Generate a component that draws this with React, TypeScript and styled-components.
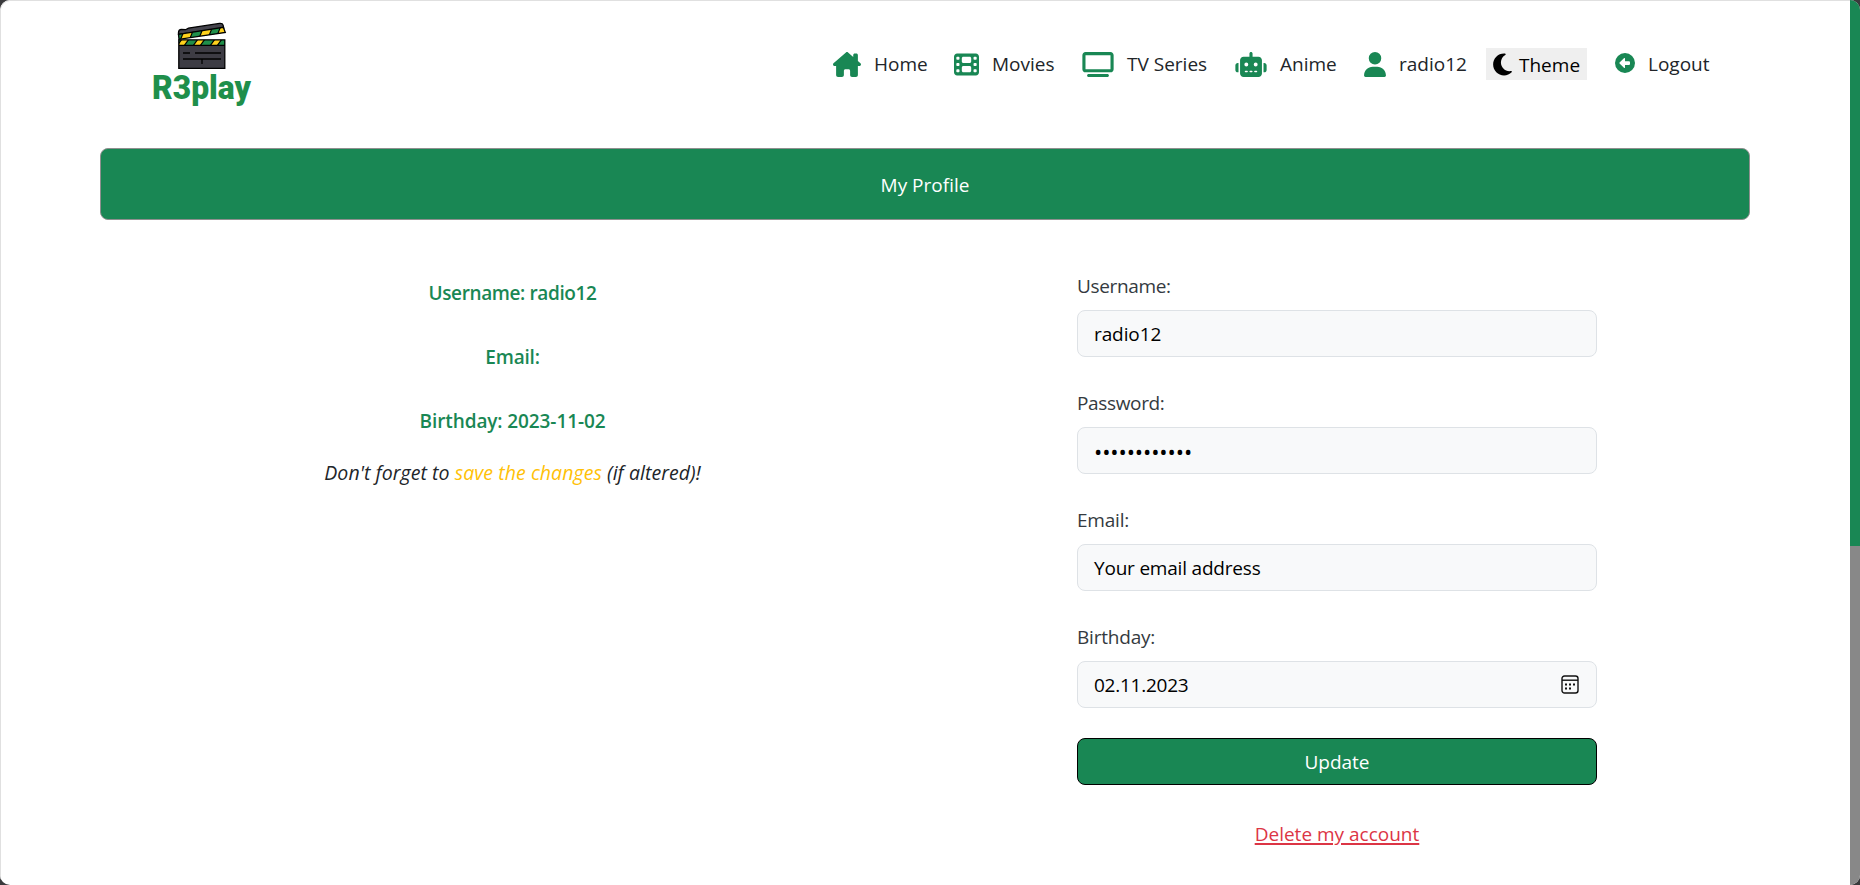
import React from "react";
import styled, { createGlobalStyle } from "styled-components";
import {
  FaHouseChimney,
  FaFilm,
  FaTv,
  FaRobot,
  FaUser,
  FaMoon,
  FaCircleLeft,
} from "react-icons/fa6";

const green = "#198754";

const GlobalStyle = createGlobalStyle`
  * { box-sizing: border-box; }
  body {
    margin: 0;
    background: #3a3a3c;
    font-family: "Open Sans", "Noto Sans", sans-serif;
    font-size: 19px;
    line-height: 30px;
    color: #212529;
  }
`;

const Window = styled.div`
  display: flex;
  width: 1860px;
  height: 885px;
  overflow: hidden;
  border-radius: 10px;
  background: #fff;
`;

const Page = styled.div`
  flex: 1;
  border: solid #e0e0e0;
  border-width: 1px 0 0 1px;
  border-top-left-radius: 10px;
  padding: 0 100px 0 99px;
`;

const ScrollTrack = styled.div`
  width: 10px;
  background: #888;
`;

const ScrollThumb = styled.div`
  height: 546px;
  background: ${green};
`;

const Header = styled.header`
  display: flex;
  align-items: center;
  height: 126px;
  padding-left: 46px;
`;

const Nav = styled.nav`
  display: flex;
  align-items: center;
  margin-left: auto;
  padding-right: 39px;
  gap: 27px;
`;

const NavLink = styled.a<{ $icon: number }>`
  display: flex;
  align-items: center;
  gap: 13px;
  color: #212529;
  svg {
    display: block;
    width: ${(p) => p.$icon}px;
    height: 25px;
    color: ${green};
  }
`;

const Label = styled.span<{ $w: number }>`
  width: ${(p) => p.$w}px;
  white-space: nowrap;
`;

const LogoutIcon = styled.span`
  display: flex;
  margin-top: -2px;
  && svg {
    height: 20px;
  }
`;

const ThemeButton = styled.button`
  display: flex;
  align-items: center;
  gap: 7px;
  width: 101px;
  height: 32px;
  margin: 0 1px 0 -7px;
  padding: 2px 7px 0;
  border: 0;
  background: #efefef;
  color: #000;
  font: inherit;
  line-height: 30px;
  text-align: left;
  svg {
    width: 19px;
    height: 25px;
    margin-top: -2px;
    flex: none;
  }
`;

const Banner = styled.h1`
  margin: 21px 0 0;
  height: 72px;
  border: 1px solid #8f8f8f;
  border-radius: 8px;
  background: ${green};
  color: #fff;
  font-size: 19px;
  font-weight: 400;
  line-height: 72px;
  text-align: center;
`;

const Columns = styled.main`
  display: grid;
  grid-template-columns: 1fr 1fr;
`;

const Summary = styled.section`
  padding-top: 58px;
  text-align: center;
`;

const Fact = styled.p<{ $track: number }>`
  margin: 0 0 34px;
  color: ${green};
  font-weight: 600;
  letter-spacing: ${(p) => p.$track}px;
`;

const Reminder = styled.p`
  margin: -12px 0 0;
  font-size: 19.5px;
  font-style: italic;
  letter-spacing: 0.06px;
`;

const Highlight = styled.span`
  color: #ffc107;
`;

const Form = styled.form`
  width: 520px;
  margin-left: 152px;
  padding-top: 51px;
`;

const Field = styled.div`
  margin-bottom: 31px;
`;

const FieldLabel = styled.label<{ $track: number }>`
  display: block;
  height: 30px;
  margin-bottom: 9px;
  color: #343a40;
  letter-spacing: ${(p) => p.$track}px;
`;

const Control = styled.div<{ $track: number; $size?: number }>`
  display: flex;
  align-items: center;
  justify-content: space-between;
  height: 47px;
  padding: 0 17px 0 16px;
  border: 1px solid #dee2e6;
  border-radius: 8px;
  background: #f8f9fa;
  color: #000;
  font-size: ${(p) => p.$size ?? 19}px;
  letter-spacing: ${(p) => p.$track}px;
`;

const UpdateButton = styled.button`
  display: block;
  width: 100%;
  height: 47px;
  margin: -1px 0 0;
  padding: 0;
  border: 1px solid #000;
  border-radius: 8px;
  background: ${green};
  color: #fff;
  font: inherit;
`;

const DeleteLink = styled.a`
  display: block;
  margin-top: 34px;
  color: #dc3545;
  text-align: center;
  text-decoration: underline;
  text-decoration-thickness: 2px;
  text-underline-offset: 2px;
`;

const LogoArt = styled.svg`
  display: block;
  overflow: visible;
`;

const Logo = () => (
  <LogoArt width="116" height="100" viewBox="0 -4 116 100">
    <defs>
      <clipPath id="arm">
        <path d="M32.5 16.3 77.3 9.3 79.3 14.5 33 21.3z" />
      </clipPath>
      <clipPath id="bar">
        <path d="M33 22h46v5H33z" />
      </clipPath>
    </defs>
    <path
      d="M32.5 16.5v-2q0-3 3-3.2l4 .4 3-1.6 31-4.7q3-.4 3.6 1.800l.7 3z"
      fill="#45444d"
      stroke="#000"
      strokeWidth="1.3"
    />
    <path d="M32.500 16.300 77.300 9.300 79.300 14.500 33 21.300z" fill="#1f8f4b" />
    <g clipPath="url(#arm)">
      {[36, 54, 71].map((x) => (
        <path key={x} d={`M${x + 5} 5h9l-7 18h-9z`} fill="#ffd21c" stroke="#000" strokeWidth="1.2" />
      ))}
    </g>
    <path d="M32.500 16.300 77.300 9.300 79.300 14.500 33 21.300z" fill="none" stroke="#000" strokeWidth="1.3" />
    <path d="M32.8 21.800h46v28.500h-46z" fill="#3d3c44" />
    <path d="M33 22h46v5H33z" fill="#1f8f4b" />
    <g clipPath="url(#bar)">
      {[31, 47, 64].map((x) => (
        <path key={x} d={`M${x + 5} 21h7l-5 7h-7z`} fill="#ffd21c" stroke="#000" strokeWidth="1.2" />
      ))}
    </g>
    <path
      d="M32.800 21.800h46v28.500h-46zM32.800 27.300h46M37 35h7m5 0h26M37 41h38M56 41v5"
      stroke="#000"
      strokeWidth="1.3"
      fill="none"
    />
    <text
      x="6"
      y="81"
      fontFamily="Roboto, sans-serif"
      fontWeight="900"
      fontSize="34"
      textLength="99"
      lengthAdjust="spacingAndGlyphs"
      fill="#1f8f4b"
    >
      R3play
    </text>
  </LogoArt>
);

const CalendarIcon = () => (
  <svg width="18" height="19" viewBox="0 0 18 19">
    <rect x="1" y="1" width="16" height="17" rx="2.5" fill="none" stroke="#111" strokeWidth="1.4" />
    <path d="M1 5.2h16" stroke="#111" strokeWidth="1.4" />
    <path
      d="M4 8.5h2v2H4zm4 0h2v2H8zm4 0h2v2h-2zM4 12.5h2v2H4zm4 0h2v2H8z"
      fill="#111"
    />
  </svg>
);

export default function App() {
  return (
    <>
      <GlobalStyle />
      <Window>
        <Page>
          <Header>
            <Logo />
            <Nav>
              <NavLink $icon={28}><FaHouseChimney /><Label $w={53}>Home</Label></NavLink>
              <NavLink $icon={25}><FaFilm /><Label $w={63}>Movies</Label></NavLink>
              <NavLink $icon={32}><FaTv /><Label $w={81}>TV Series</Label></NavLink>
              <NavLink $icon={32}><FaRobot /><Label $w={57}>Anime</Label></NavLink>
              <NavLink $icon={22}><FaUser /><Label $w={67}>radio12</Label></NavLink>
              <ThemeButton><FaMoon /><Label $w={60}>Theme</Label></ThemeButton>
              <NavLink $icon={20}>
                <LogoutIcon><FaCircleLeft /></LogoutIcon>
                <Label $w={63}>Logout</Label>
              </NavLink>
            </Nav>
          </Header>
          <Banner>My Profile</Banner>
          <Columns>
            <Summary>
              <Fact $track={-0.38}>Username: radio12</Fact>
              <Fact $track={-0.2}>Email:</Fact>
              <Fact $track={-0.1}>Birthday: 2023-11-02</Fact>
              <Reminder>
                Don't forget to <Highlight>save the changes</Highlight> (if altered)!
              </Reminder>
            </Summary>
            <Form>
              <Field>
                <FieldLabel $track={-0.35}>Username:</FieldLabel>
                <Control $track={-0.1}>radio12</Control>
              </Field>
              <Field>
                <FieldLabel $track={-0.35}>Password:</FieldLabel>
                <Control $track={-0.1} $size={22}>••••••••••••</Control>
              </Field>
              <Field>
                <FieldLabel $track={-0.2}>Email:</FieldLabel>
                <Control $track={-0.2}>Your email address</Control>
              </Field>
              <Field>
                <FieldLabel $track={-0.2}>Birthday:</FieldLabel>
                <Control $track={-0.25}>02.11.2023<CalendarIcon /></Control>
              </Field>
              <UpdateButton type="button">Update</UpdateButton>
              <DeleteLink>Delete my account</DeleteLink>
            </Form>
          </Columns>
        </Page>
        <ScrollTrack>
          <ScrollThumb />
        </ScrollTrack>
      </Window>
    </>
  );
}
